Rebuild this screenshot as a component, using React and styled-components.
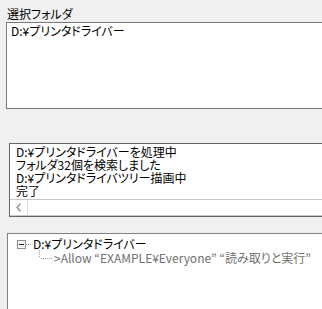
import React from "react";
import styled, { createGlobalStyle } from "styled-components";

const Global = createGlobalStyle`
    html, body {
        margin: 0;
        padding: 0;
        background: #f0f0f0;
    }
    body {
        font-family: "MS UI Gothic", "Noto Sans CJK JP", sans-serif;
        font-size: 12px;
        font-feature-settings: "palt";
        color: #000;
    }
`;

const Window = styled.div`
    width: 322px;
    height: 309px;
    overflow: hidden;
    display: flex;
    flex-direction: column;
    padding-top: 6px;
    box-sizing: border-box;
`;

const Label = styled.div`
    margin-left: 7px;
    height: 19px;
    line-height: 16px;
    font-size: 12px;
`;

const Box = styled.div`
    flex-shrink: 0;
    width: 340px;
    margin-left: ${(p) => p.$left}px;
    margin-top: ${(p) => p.$top || 0}px;
    height: ${(p) => p.$height}px;
    background: #fff;
    border: 1px solid ${(p) => p.$border || "#7a7a7a"};
    box-sizing: border-box;
    display: flex;
    flex-direction: column;
`;

const BoxText = styled.div`
    padding: 1px 0 0 4px;
    line-height: 13px;
    white-space: pre;
`;

const LogLines = styled.div`
    flex: 1;
    padding: 1px 0 0 6px;
    line-height: 13px;
    white-space: pre;
    overflow: hidden;
`;

const HScroll = styled.div`
    height: 17px;
    flex-shrink: 0;
    border-top: 1px solid #c8c8c8;
    border-bottom: 1px solid #c8c8c8;
    box-sizing: border-box;
    display: flex;
`;

const ScrollButton = styled.div`
    width: 17px;
    border-right: 1px solid #dcdcdc;
    display: flex;
    align-items: center;
    justify-content: center;
`;

const Tree = styled.div`
    padding: 3px 0 0 9px;
    display: flex;
    flex-direction: column;
`;

const TreeRow = styled.div`
    display: flex;
    align-items: center;
    height: 14px;
    line-height: 14px;
    white-space: pre;
    color: ${(p) => (p.$dim ? "#707070" : "#000")};
`;

const Expander = styled.div`
    width: 9px;
    height: 9px;
    flex-shrink: 0;
    box-sizing: border-box;
    border: 1px solid #919191;
    background: #f4f4f4;
    position: relative;
    &::after {
        content: "";
        position: absolute;
        left: 1px;
        top: 3px;
        width: 5px;
        height: 1px;
        background: #222;
    }
`;

const DotH = styled.div`
    width: ${(p) => p.$w}px;
    height: 1px;
    flex-shrink: 0;
    margin-right: ${(p) => p.$after || 0}px;
    background-image: linear-gradient(to right, #a0a0a0 1px, transparent 1px);
    background-size: 2px 1px;
`;

const Connector = styled.div`
    width: 15px;
    height: 14px;
    flex-shrink: 0;
    margin-left: 22px;
    position: relative;
    &::before {
        content: "";
        position: absolute;
        left: 0;
        top: -1px;
        width: 1px;
        height: 8px;
        background-image: linear-gradient(to bottom, #a0a0a0 1px, transparent 1px);
        background-size: 1px 2px;
    }
    &::after {
        content: "";
        position: absolute;
        left: 2px;
        top: 7px;
        width: 12px;
        height: 1px;
        background-image: linear-gradient(to right, #a0a0a0 1px, transparent 1px);
        background-size: 2px 1px;
    }
`;

export default function App() {
    return (
        <>
            <Global />
            <Window>
                <Label>選択フォルダ</Label>
                <Box $left={6} $height={87} $border="#7a7a7a">
                    <BoxText>D:¥プリンタドライバー</BoxText>
                </Box>
                <Box $left={9} $top={34} $height={74} $border="#646464">
                    <LogLines>
                        {"D:¥プリンタドライバーを処理中\nフォルダ32個を検索しました\nD:¥プリンタドライバツリー描画中\n完了"}
                    </LogLines>
                    <HScroll>
                        <ScrollButton>
                            <svg width="6" height="9" viewBox="0 0 6 9">
                                <path d="M4.5 0.5 L1 4.5 L4.5 8.5" fill="none" stroke="#8a8a8a" strokeWidth="1.2" />
                            </svg>
                        </ScrollButton>
                    </HScroll>
                </Box>
                <Box $left={7} $top={16} $height={90} $border="#828282">
                    <Tree>
                        <TreeRow>
                            <Expander />
                            <DotH $w={5} $after={2} />
                            D:¥プリンタドライバー
                        </TreeRow>
                        <TreeRow $dim>
                            <Connector />
                            {">Allow “EXAMPLE¥Everyone” “読み取りと実行”"}
                        </TreeRow>
                    </Tree>
                </Box>
            </Window>
        </>
    );
}
